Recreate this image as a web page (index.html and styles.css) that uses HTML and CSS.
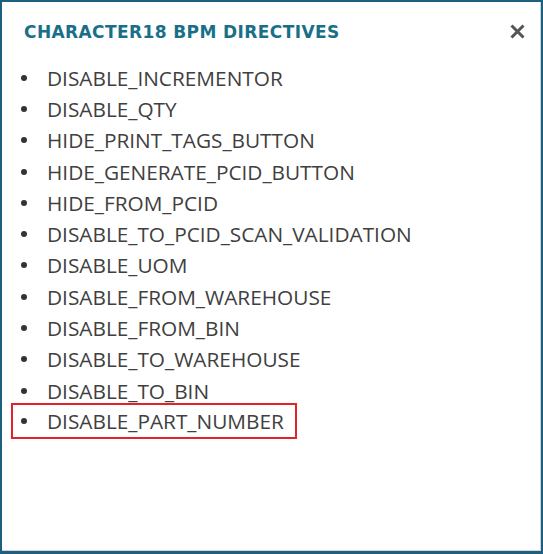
FILE: index.html
```
<!DOCTYPE html>
<html>
<head>
<meta charset="utf-8">
<link rel="stylesheet" href="styles.css">
</head>
<body>
<div class="frame">
  <div class="dialog">
    <div class="header">
      <h1 class="title">CHARACTER18 BPM DIRECTIVES</h1>
      <button class="close" aria-label="Close">
        <svg width="17" height="17" viewBox="0 0 17 17"><path d="M2.5 2.5 L14.5 14.5 M14.5 2.5 L2.5 14.5" stroke="#555" stroke-width="3" stroke-linecap="butt"/></svg>
      </button>
    </div>
    <ul class="list">
      <li class="item"><span class="dot"></span>DISABLE_INCREMENTOR</li>
      <li class="item"><span class="dot"></span>DISABLE_QTY</li>
      <li class="item"><span class="dot"></span>HIDE_PRINT_TAGS_BUTTON</li>
      <li class="item"><span class="dot"></span>HIDE_GENERATE_PCID_BUTTON</li>
      <li class="item"><span class="dot"></span>HIDE_FROM_PCID</li>
      <li class="item"><span class="dot"></span>DISABLE_TO_PCID_SCAN_VALIDATION</li>
      <li class="item"><span class="dot"></span>DISABLE_UOM</li>
      <li class="item"><span class="dot"></span>DISABLE_FROM_WAREHOUSE</li>
      <li class="item"><span class="dot"></span>DISABLE_FROM_BIN</li>
      <li class="item"><span class="dot"></span>DISABLE_TO_WAREHOUSE</li>
      <li class="item"><span class="dot"></span>DISABLE_TO_BIN</li>
      <li class="item highlight"><span class="dot"></span>DISABLE_PART_NUMBER</li>
    </ul>
  </div>
</div>
</body>
</html>
```
FILE: styles.css
```
html, body {
  margin: 0;
  padding: 0;
  background: #ffffff;
}
.frame {
  width: 543px;
  height: 554px;
  box-sizing: border-box;
  border: 2px solid #1d5f7e;
  border-bottom-width: 3px;
  background: #ffffff;
}
.dialog {
  height: 100%;
  box-sizing: border-box;
  border-right: 1px solid #d0d4d8;
  border-bottom: 1px solid #d0d4d8;
}
.header {
  display: flex;
  align-items: center;
  justify-content: space-between;
  padding: 19px 14px 0 22px;
  height: 22px;
}
.title {
  margin: 0;
  font-family: "DejaVu Sans", sans-serif;
  font-weight: 700;
  font-size: 17px;
  letter-spacing: 0.4px;
  color: #1a6f88;
}
.close {
  border: 0;
  background: none;
  padding: 0;
  margin: -2px 0 0 0;
  width: 17px;
  height: 17px;
  display: flex;
  cursor: pointer;
}
.list {
  list-style: none;
  margin: 0;
  padding: 19px 0 0 11px;
}
.item {
  display: flex;
  align-items: center;
  height: 31.3px;
  font-family: "Open Sans", sans-serif;
  font-size: 20.8px;
  color: #404040;
  width: 282px;
  box-sizing: border-box;
  padding-left: 8px;
}
.dot {
  width: 6px;
  height: 6px;
  border-radius: 50%;
  background: #333;
  margin-right: 20px;
  flex: none;
}
.highlight {
  outline: 2px solid #e0242a;
  margin-top: -1px;
  margin-bottom: 1px;
}
```
